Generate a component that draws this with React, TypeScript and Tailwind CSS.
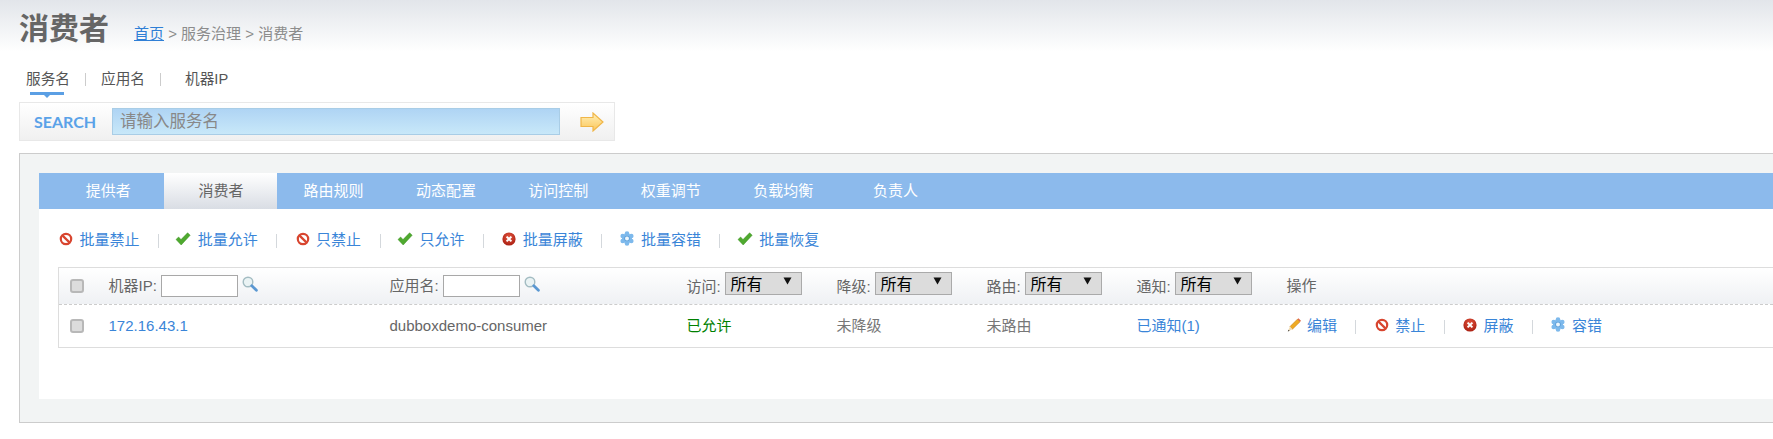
import React from 'react';

const BanIcon = () => (
  <svg width="14" height="14" viewBox="0 0 14 14" className="block">
    <circle cx="7" cy="7" r="5.2" fill="#fff" stroke="#d8452f" strokeWidth="2.2" />
    <path d="M3.6 3.6 L10.4 10.4" stroke="#d8452f" strokeWidth="2.2" />
  </svg>
);

const CheckIcon = () => (
  <svg width="16" height="14" viewBox="0 0 16 14" className="block -ml-0.5">
    <path d="M1 7.5 L3.6 5 L6 7.6 L12.6 0.8 L15.2 3.2 L6.2 13 Z" fill="#4fa92f" stroke="#3f9426" strokeWidth="0.5" />
  </svg>
);

const CrossIcon = () => (
  <svg width="14" height="14" viewBox="0 0 14 14" className="block">
    <defs>
      <radialGradient id="crossFill" cx="50%" cy="35%" r="65%">
        <stop offset="0%" stopColor="#e4563f" />
        <stop offset="100%" stopColor="#a91f12" />
      </radialGradient>
    </defs>
    <circle cx="7" cy="7" r="6.6" fill="url(#crossFill)" />
    <path d="M4.6 4.6 L9.4 9.4 M9.4 4.6 L4.6 9.4" stroke="#fff" strokeWidth="2" />
  </svg>
);

const GearIcon = () => (
  <svg width="14" height="15" viewBox="0 0 14 15" className="block">
    <g fill="#7db9ec">
      <circle cx="7" cy="7.5" r="5" />
      <circle cx="7" cy="2.6" r="2.3" />
      <circle cx="7" cy="12.4" r="2.3" />
      <circle cx="2.7" cy="5" r="2.3" />
      <circle cx="11.3" cy="5" r="2.3" />
      <circle cx="2.7" cy="10" r="2.3" />
      <circle cx="11.3" cy="10" r="2.3" />
    </g>
    <circle cx="7" cy="7.5" r="2.8" fill="#5e9fd8" />
    <circle cx="7" cy="7.5" r="2" fill="#eef7fd" />
  </svg>
);

const PencilIcon = () => (
  <svg width="14" height="14" viewBox="0 0 14 14" className="block">
    <path d="M3 8.6 L10.4 1.2 L13 3.8 L5.4 11.2 Z" fill="#efaa22" stroke="#c9821a" strokeWidth="0.6" />
    <path d="M10.4 1.2 L11.4 0.2 L14 2.8 L13 3.8 Z" fill="#e0674a" />
    <path d="M3 8.6 L5.4 11.2 L0.8 13.4 Z" fill="#f3dcb0" />
    <path d="M1.6 11.8 L2.6 12.7 L0.8 13.4 Z" fill="#333" />
  </svg>
);

const SearchIcon = () => (
  <svg width="16" height="16" viewBox="0 0 16 16" className="block">
    <circle cx="6" cy="6" r="4.8" fill="#eaf3f4" stroke="#a3bcc2" strokeWidth="1.4" />
    <path d="M9.8 9.8 L14.4 14.2" stroke="#5b98d2" strokeWidth="2.8" strokeLinecap="round" />
  </svg>
);

const GoArrow = () => (
  <svg width="24" height="20" viewBox="0 0 24 20" className="block">
    <defs>
      <linearGradient id="goFill" x1="0" y1="0" x2="0" y2="1">
        <stop offset="0%" stopColor="#fff0b8" />
        <stop offset="100%" stopColor="#fbc65a" />
      </linearGradient>
    </defs>
    <path d="M1 5.5 H13 V1 L23 10 L13 19 V14.5 H1 Z" fill="url(#goFill)" stroke="#f0b648" strokeWidth="1.2" />
  </svg>
);

const ACTIONS = [
  { label: '批量禁止', icon: <BanIcon /> },
  { label: '批量允许', icon: <CheckIcon /> },
  { label: '只禁止', icon: <BanIcon /> },
  { label: '只允许', icon: <CheckIcon /> },
  { label: '批量屏蔽', icon: <CrossIcon /> },
  { label: '批量容错', icon: <GearIcon /> },
  { label: '批量恢复', icon: <CheckIcon /> },
];

const OPS = [
  { label: '编辑', icon: <PencilIcon /> },
  { label: '禁止', icon: <BanIcon /> },
  { label: '屏蔽', icon: <CrossIcon /> },
  { label: '容错', icon: <GearIcon /> },
];

const TABS = ['提供者', '消费者', '路由规则', '动态配置', '访问控制', '权重调节', '负载均衡', '负责人'];

const Sep = () => <span className="w-px h-[14px] mt-[2px] bg-[#d4d8dc]" />;

const LinkList = ({ items }: { items: { label: string; icon: React.ReactNode }[] }) => (
  <div className="flex items-center gap-[18.4px]">
    {items.map((item, i) => (
      <React.Fragment key={item.label}>
        {i > 0 && <Sep />}
        <a className="flex items-center text-[#3a85d8]">
          <span className="w-[20.5px] -mt-[3px]">{item.icon}</span>
          {item.label}
        </a>
      </React.Fragment>
    ))}
  </div>
);

const Check = () => (
  <input type="checkbox" readOnly className="appearance-none block w-[14px] h-[14px] rounded-[3px] bg-[#dcdcdc] border-2 border-[#b8b8b8]" />
);

const Filter = ({ label }: { label: string }) => (
  <div className="flex items-center">
    <span className="w-[38px] pt-[3px]">{label}</span>
    <div className="flex justify-between w-[77px] h-[23px] -mt-[6px] pl-[5px] pr-[9px] bg-[#dcdcdc] border border-[#aaa] text-black text-[16px] leading-[24px]">
      所有
      <svg width="9" height="8" viewBox="0 0 9 8" className="mt-[4px]">
        <path d="M0.5 0.5 H8.5 L4.5 7.5 Z" fill="#111" />
      </svg>
    </div>
  </div>
);

const TextFilter = ({ label, w }: { label: string; w: string }) => (
  <div className="flex items-center">
    <span className={w}>{label}</span>
    <input className="w-[77px] h-[22px] border border-[#a8a8a8] bg-white" />
    <span className="ml-[4px] -mt-[5px]"><SearchIcon /></span>
  </div>
);

const App: React.FC = () => {
  return (
    <div className="w-full h-[439px] overflow-hidden bg-white text-[15px] text-[#777] font-['Liberation_Sans','Noto_Sans_CJK_SC',sans-serif]">
      <div className="h-[52px] pl-[19px] flex items-start bg-gradient-to-b from-[#e2e5ea] to-white">
        <h1 className="mt-[10px] w-[115px] text-[30px] leading-[38px] font-bold text-[#666]">消费者</h1>
        <div className="mt-[24px] leading-[20px] text-[#8c8c8c]">
          <a className="text-[#2f7fd6] underline">首页</a> &gt; 服务治理 &gt; 消费者
        </div>
      </div>

      <div className="h-[50px] pl-[26px] pt-[17px] flex items-start text-[14.67px] text-[#555] leading-[20px] whitespace-nowrap">
        <div className="relative w-[44px]">
          服务名
          <span className="absolute left-[4px] top-[23px] w-[34px] h-[3px] bg-[#5b9fe4]" />
          <span className="absolute left-[18px] top-[26px] w-0 h-0 border-x-[3px] border-t-[3px] border-x-transparent border-t-[#5b9fe4]" />
        </div>
        <span className="ml-[15px] mt-[4px] w-px h-[13px] bg-[#ccc]" />
        <div className="ml-[15px] w-[44px]">应用名</div>
        <span className="ml-[15px] mt-[4px] w-px h-[13px] bg-[#ccc]" />
        <div className="ml-[24px]">机器IP</div>
      </div>

      <div className="ml-[19px] w-[596px] h-[39px] flex items-center border border-[#e8e8e8] bg-gradient-to-b from-white to-[#f0f0f0]">
        <span className="ml-[14px] w-[78px] text-[16px] font-bold font-['Lato',sans-serif] text-[#5aa2e8]">SEARCH</span>
        <input
          placeholder="请输入服务名"
          className="w-[448px] h-[27px] pl-[7px] text-[16.5px] bg-gradient-to-b from-[#afd4f4] to-[#c8e8f9] border border-[#a9cde6] placeholder:text-[#888]"
        />
        <span className="ml-[20px]"><GoArrow /></span>
      </div>

      <div className="mt-[12px] ml-[19px] h-[270px] pl-[19px] pt-[19px] pb-[23px] bg-[#f2f4f4] border-y border-l border-[#ccc]">
        <div className="h-full flex flex-col bg-white">
          <div className="flex h-[36px] pl-[13px] bg-[#8cbaec] text-white">
            {TABS.map(t => (
              <div
                key={t}
                className={
                  t === '消费者'
                    ? 'w-[113px] flex items-center justify-center text-[#666] bg-gradient-to-b from-white to-[#d9dde4]'
                    : 'w-[112.4px] flex items-center justify-center'
                }
              >
                {t}
              </div>
            ))}
          </div>

          <div className="mt-[20px] ml-[20px] h-[21px]">
            <LinkList items={ACTIONS} />
          </div>

          <div className="mt-[17px] ml-[19px] h-[81px] flex flex-col border-y border-l border-[#ddd]">
            <div className="h-[37px] grid grid-cols-[49.5px_281px_297px_150px_150px_150px_150px_1fr] items-center bg-gradient-to-b from-white to-[#eff1f4] border-b border-dashed border-[#ccc] text-[#666]">
              <div className="pl-[11px]"><Check /></div>
              <TextFilter label="机器IP:" w="w-[52px]" />
              <TextFilter label="应用名:" w="w-[53px]" />
              <Filter label="访问:" />
              <Filter label="降级:" />
              <Filter label="路由:" />
              <Filter label="通知:" />
              <div>操作</div>
            </div>
            <div className="flex-1 grid grid-cols-[49.5px_281px_297px_150px_150px_150px_150px_1fr] items-center">
              <div className="pl-[11px]"><Check /></div>
              <a className="text-[#3a85d8]">172.16.43.1</a>
              <div className="text-[#666]">dubboxdemo-consumer</div>
              <div className="text-[#008000]">已允许</div>
              <div>未降级</div>
              <div>未路由</div>
              <a className="text-[#3a85d8]">已通知(1)</a>
              <LinkList items={OPS} />
            </div>
          </div>
        </div>
      </div>
    </div>
  );
};

export default App;
